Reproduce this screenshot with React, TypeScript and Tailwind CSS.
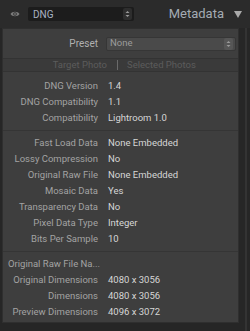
import React from "react";

const rows1: [string, string][] = [
  ["DNG Version", "1.4"],
  ["DNG Compatibility", "1.1"],
  ["Compatibility", "Lightroom 1.0"],
];
const rows2: [string, string][] = [
  ["Fast Load Data", "None Embedded"],
  ["Lossy Compression", "No"],
  ["Original Raw File", "None Embedded"],
  ["Mosaic Data", "Yes"],
  ["Transparency Data", "No"],
  ["Pixel Data Type", "Integer"],
  ["Bits Per Sample", "10"],
];
const rows3: [string, string][] = [
  ["Original Dimensions", "4080 x 3056"],
  ["Dimensions", "4080 x 3056"],
  ["Preview Dimensions", "4096 x 3072"],
];

function Row({ label, value }: { label: string; value: string }) {
  return (
    <div className="flex h-[16px] items-center">
      <div className="w-[95px] shrink-0 text-right text-[#a3a3a3]">{label}</div>
      <div className="ml-[10px] text-[#d6d6d6]">{value}</div>
    </div>
  );
}

function Spinner({ dark }: { dark?: boolean }) {
  return (
    <div
      className={`flex h-[12px] w-[9px] items-center justify-center rounded-[2px] ${
        dark ? "bg-[#2e2e2e]" : "bg-[#565656]"
      }`}
    >
      <svg width="5" height="8" viewBox="0 0 5 8">
        <path d="M0.5 3 L2.5 1 L4.5 3 Z" fill="#9a9a9a" />
        <path d="M0.5 5 L2.5 7 L4.5 5 Z" fill="#9a9a9a" />
      </svg>
    </div>
  );
}

export default function App() {
  return (
    <div
      className="flex h-[331px] w-[250px] flex-col bg-[#262626] text-[9.5px]"
      style={{ fontFamily: "Roboto, 'Liberation Sans', sans-serif" }}
    >
      <div className="flex h-[28px] items-center bg-[#2b2b2b] pr-[8px]">
        <div className="flex w-[28px] justify-center pl-[2px]">
          <svg width="10" height="8" viewBox="0 0 10 8">
            <path d="M0.5 4 C2 1 8 1 9.5 4 C8 7 2 7 0.5 4 Z" fill="#7a7a7a" />
            <circle cx="5" cy="4" r="1.8" fill="#2b2b2b" />
            <circle cx="5" cy="4" r="0.9" fill="#7a7a7a" />
          </svg>
        </div>
        <div className="flex h-[14px] w-[106px] items-center justify-between rounded-[2px] bg-[#1c1c1c] pl-[5px] pr-[2px]">
          <span className="text-[10px] text-[#a9b2c2]">DNG</span>
          <Spinner dark />
        </div>
        <div className="ml-auto flex items-center">
          <span className="text-[13px] text-[#a4abb4]">Metadata</span>
          <svg className="ml-[10px]" width="8" height="7" viewBox="0 0 8 7">
            <path d="M0 0 L8 0 L4 7 Z" fill="#a9a9a9" />
          </svg>
        </div>
      </div>
      <div className="flex flex-1">
        <div className="ml-[2px] flex h-[295px] flex-1 flex-col border border-[#2f2f2f] bg-[#3e3e3e]">
          <div className="mt-[7px] flex h-[15px] items-center">
            <div className="w-[95px] text-right text-[10px] text-[#b0b0b0]">Preset</div>
            <div className="ml-[8px] mr-[2px] flex h-[14px] flex-1 items-center justify-between rounded-[2px] border border-[#363636] bg-[#4a4a4a] pl-[3px] pr-[2px]">
              <span className="text-[#9c9c9c]">None</span>
              <Spinner />
            </div>
          </div>
          <div className="mt-[7px] flex h-[14px] items-center border-y border-[#333333] bg-[#3a3a3a] pr-[4px]">
            <div className="w-[104px] text-right text-[#5c5c5c]">Target Photo</div>
            <div className="ml-[10px] h-[10px] w-px bg-[#6a6a6a]" />
            <div className="ml-[9px] text-[#5c5c5c]">Selected Photos</div>
          </div>
          <div className="mt-[6px]">
            {rows1.map(([l, v]) => (
              <Row key={l} label={l} value={v} />
            ))}
          </div>
          <div className="my-[4px] h-px bg-[#353535]" />
          <div>
            {rows2.map(([l, v]) => (
              <Row key={l} label={l} value={v} />
            ))}
          </div>
          <div className="my-[4px] h-px bg-[#353535]" />
          <div className="flex h-[16px] items-center pl-[5px] text-[#a3a3a3]">Original Raw File Na...</div>
          {rows3.map(([l, v]) => (
            <Row key={l} label={l} value={v} />
          ))}
        </div>
        <div className="flex w-[11px] justify-center">
          <div className="ml-[2px] w-[2px] bg-[#333333]" />
        </div>
      </div>
    </div>
  );
}
